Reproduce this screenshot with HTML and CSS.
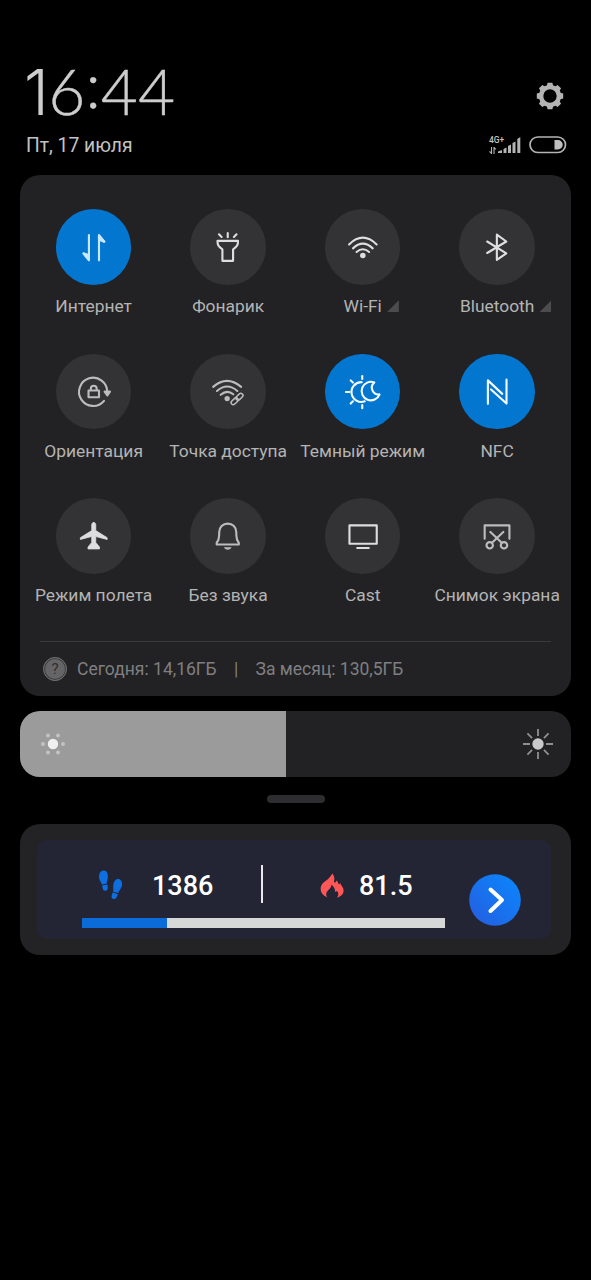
FILE: index.html
```html
<!DOCTYPE html>
<html lang="ru">
<head>
<meta charset="utf-8">
<title>Control center</title>
<link rel="stylesheet" href="styles.css">
</head>
<body>
<main class="screen">
  <header class="header">
    <div class="header-row">
      <div class="clock"><span class="one">1</span>6<span class="colon">:</span>44</div>
      <svg class="gear" width="28" height="28" viewBox="-14 -14 28 28">
        <g fill="#b4b4b4">
          <g id="teeth"><path d="M-3.200-10-2.400-13.200h4.800L3.200-10zM-3.200 10-2.400 13.200h4.800L3.200 10z"/></g>
          <use href="#teeth" transform="rotate(45)"/><use href="#teeth" transform="rotate(90)"/><use href="#teeth" transform="rotate(135)"/>
        </g>
        <circle r="8.900" fill="none" stroke="#b4b4b4" stroke-width="4.400"/>
      </svg>
    </div>
    <div class="header-row status-row">
      <div class="date">Пт, 17 июля</div>
      <div class="status">
        <div class="network">
          <span class="network-type">4G+</span>
          <svg width="7" height="7" viewBox="0 0 7 7"><path d="M2.500 0v6.300L.5 4.300M5 7V.5l1.700 1.800" fill="none" stroke="#b4b4b4" stroke-width="1.100"/></svg>
        </div>
        <svg class="signal" width="23" height="16" viewBox="0 0 23 16" fill="#b4b4b4"><path d="M0 16v-1.500L4 13v3zM5.500 16v-4l3-1.500V16zM10 16V9l3-1.500V16zM14.500 16V6l3-1.500V16zM19.300 16V2l3-2v16z"/></svg>
        <svg class="battery" width="38" height="18" viewBox="0 0 38 18"><rect x="1" y="1" width="35.500" height="15.500" rx="7.750" fill="none" stroke="#b4b4b4" stroke-width="1.700"/><path d="M25.500 4h3.500a4.700 4.700 0 0 1 0 9.500h-3.500z" fill="#c0c0c0"/></svg>
      </div>
    </div>
  </header>

  <section class="panel">
    <div class="tiles">
      <div class="tile"><svg class="disc on" viewBox="0 0 75 75"><path d="M32.700 26v25L27.500 44.500M42.700 51V26l5 6.300"/><path class="solid" d="M27.300 44l5.400 2v4zM48 32.500l-5.300-2v-4z"/></svg><span class="label">Интернет</span></div>
      <div class="tile"><svg class="disc" viewBox="0 0 75 75"><path d="M27.300 31.700h20.400c0 4-.7 5.600-4.900 8.300v11.500H32.200V40c-4.200-2.700-4.900-4.300-4.900-8.300zM37.500 24v4M28.800 25.200l2.600 2.600M46.200 25.200l-2.600 2.600"/></svg><span class="label">Фонарик</span></div>
      <div class="tile"><svg class="disc" viewBox="0 0 75 75"><path d="M23.900 35.200q13.700-13.400 27.400 0M27.800 39.100q9.800-9.200 19.600 0M31.400 42.700q6.200-5.400 12.400 0"/><circle class="solid" cx="37.600" cy="46.200" r="1.700"/></svg><span class="label">Wi-Fi<i class="more"></i></span></div>
      <div class="tile"><svg class="disc" viewBox="0 0 75 75"><path d="M28 32.300 47 44l-9.400 6.500v-25L47 32.300 28 43.700"/></svg><span class="label">Bluetooth<i class="more"></i></span></div>

      <div class="tile"><svg class="disc dim" viewBox="0 0 75 75"><path d="M50.900 37.700a14 14 0 1 0-3.200 8.800M32.300 36.300h10.400v6.700H32.300zM34.600 36v-1.600a2.900 2.900 0 0 1 5.800 0V36"/><path class="solid" d="M48.300 37.300h5.300L51 41.200z"/></svg><span class="label">Ориентация</span></div>
      <div class="tile"><svg class="disc dim" viewBox="0 0 75 75"><path d="M23 32.700q13.700-12 27.800 0M26.800 36.700q10.100-8.800 20.200 0M30.500 40.500q6.400-5.600 12.500-.5"/><circle class="solid" cx="36.900" cy="44.300" r="1.600"/><g transform="rotate(-43 46.700 44.700)" stroke-width="1.500"><rect x="39.500" y="42.600" width="8" height="4.200" rx="2.100"/><rect x="46" y="42.600" width="8" height="4.200" rx="2.100"/></g></svg><span class="label">Точка доступа</span></div>
      <div class="tile"><svg class="disc on bright" viewBox="0 0 75 75"><path d="M36.500 28a9.800 9.800 0 1 0 3 19M37 21.800v3M37 50.800v3M20.800 37.700h3.400M25.500 26.200l2.200 2.200M25.500 49.200l2.200-2.200M49 28.300A9.200 9.200 0 1 0 54.200 40.100 6.700 6.700 0 0 1 49 28.300z"/></svg><span class="label">Темный режим</span></div>
      <div class="tile"><svg class="disc on bright" viewBox="0 0 75 75"><path d="M28.700 49.500V26.200L43 39.600M31.800 35.200 47.200 49.200V25.500"/></svg><span class="label">NFC</span></div>

      <div class="tile"><svg class="disc" viewBox="0 0 75 75"><path class="solid" stroke-width=".8" d="M37.500 24.300c1.300 0 2 1 2 2.300v5.800l11.300 7v1.800l-11.300-3v6l3.700 4.500v1.900H31.800v-1.900l3.700-4.500v-6l-11.300 3v-1.800l11.300-7v-5.800c0-1.300.7-2.300 2-2.300z"/></svg><span class="label">Режим полета</span></div>
      <div class="tile"><svg class="disc dim" viewBox="0 0 75 75"><path d="M26.500 46.200h22v-1.500c-1.900-2.600-2.500-5-2.500-8.300v-2.300c0-5.200-3.600-8.600-8.500-8.600S29 28.900 29 34.100v2.300c0 3.300-.6 5.700-2.500 8.300z"/><path class="solid" stroke="none" d="M33.600 48.900h7.800c-1.300 3.200-6.500 3.200-7.800 0z"/></svg><span class="label">Без звука</span></div>
      <div class="tile"><svg class="disc" viewBox="0 0 75 75"><path d="M24.300 27.200h27.100v18.300H24.300zM32 49.700h11.500"/></svg><span class="label">Cast</span></div>
      <div class="tile"><svg class="disc dim" viewBox="0 0 75 75"><path d="M25.500 40.500V27.200h24.600v13.300M32.800 44.400 44 33.700M42.400 44.400 31.200 33.700"/><circle cx="30.500" cy="47" r="3.200"/><circle cx="44.700" cy="47" r="3.200"/></svg><span class="label">Снимок экрана</span></div>
    </div>
    <div class="usage">
      <span class="help">?</span>
      <span class="today">Сегодня: 14,16ГБ</span>
      <span class="bar">|</span>
      <span class="month">За месяц: 130,5ГБ</span>
    </div>
  </section>

  <section class="brightness">
    <div class="level">
      <svg width="26" height="26" viewBox="-13 -13 26 26"><circle r="5.200" fill="#f0f0f0"/><g fill="#c2c2c2"><circle cx="-10" r="2"/><circle cx="10" r="2"/><circle cx="-5" cy="-8.500" r="2"/><circle cx="5" cy="-8.500" r="2"/><circle cx="-5" cy="8.500" r="2"/><circle cx="5" cy="8.500" r="2"/></g></svg>
    </div>
    <svg width="32" height="32" viewBox="-16 -16 32 32"><circle r="5.700" fill="#c9c9c9"/><path d="M0-15v7M0 8v7M-15 0h7M8 0h7M-10.600-10.600l4.700 4.700M5.900 5.900l4.700 4.700M-10.600 10.600l4.700-4.700M5.900-5.900l4.700-4.700" stroke="#8f8f8f" stroke-width="1.800"/></svg>
  </section>
  <div class="handle"></div>

  <section class="widget">
    <div class="fitness">
      <div class="stats">
        <div class="metrics">
          <svg class="steps" width="26" height="32" viewBox="0 0 26 32" fill="#0d6fe0"><path d="M5.500.6c3.400-.2 4.800 3.400 4.300 7.400-.3 2.200-1 3.200-1 5.500l-5 .9C3.500 12.200.8 10 1 6.200 1.100 3.200 2.700.8 5.500.6zM4.100 15.400l5.200-1c.9 3.100.6 5.900-1.500 6.400-2.600.5-3.300-2.700-3.700-5.400zM20.500 9c3.100.6 4 3.700 3.400 6.800-.7 3.500-3.200 4.700-3.600 7.200l-5.100-1.300c.4-2.800-.4-4.100.2-7C16 11.200 17.700 8.400 20.500 9zM14.700 22.600l5.100 1.300c-.7 3.200-2.100 5.700-4.600 5.200-2.500-.8-1.700-3.900-.5-6.500z"/></svg>
          <span class="value count">1386</span>
          <i class="divider"></i>
          <svg class="flame" width="24" height="25" viewBox="0 0 24 25" fill="#ff5757"><path d="M7.500 24.400C2.600 22.500.3 18.900.7 15 1.200 9.500 6.200 7.900 8.600 5.400 10.200 3.800 11.200 2.200 12.600.5c1.900 3.200 2.200 5.500 1.300 8.400l1.300.9 1.500-2.300c1.400 1.200 1.200 3 2.300 3.800l1.600-1.100c-.2 2.300 2.900 3.500 3 7.200.1 3.500-2.700 6.100-6.600 7.100 2-2.500 1.600-5-.1-6.600l-1.700 1.200c.1-3.100-1.500-6.200-4-7.400.5 4.200-4.900 5.600-5 9.300 0 1.400.4 2.500 1.300 3.400z"/></svg>
          <span class="value">81.5</span>
        </div>
        <div class="progress"><div class="progress-fill"></div></div>
      </div>
      <svg class="go" width="52" height="52" viewBox="0 0 52 52"><defs><linearGradient id="go" x1="0" y1="1" x2="1" y2="0"><stop offset=".1" stop-color="#2361e2"/><stop offset=".9" stop-color="#0c84fb"/></linearGradient></defs><circle cx="26" cy="26" r="25.800" fill="url(#go)"/><path d="M21.500 15.500 33 26 21.500 37" fill="none" stroke="#fff" stroke-width="4" stroke-linecap="round" stroke-linejoin="round"/></svg>
    </div>
  </section>
</main>
</body>
</html>
```
FILE: styles.css
```css
* { box-sizing: border-box; }
body { margin: 0; background: #000; font-family: Roboto, "Noto Sans", sans-serif; }
.screen { display: flex; flex-direction: column; width: 591px; height: 1280px; padding: 0 20px; background: #000; }

.header { display: flex; flex-direction: column; height: 175px; padding: 61px 4px 0 6px; }
.header-row { display: flex; justify-content: space-between; align-items: center; height: 62px; }
.clock { height: 62px; font: 300 64px/62px Lato, sans-serif; color: #cdcdcd; margin: -3px 0 0 -2px; -webkit-text-stroke: .4px #cdcdcd; }
.one { font: 300 63px/62px Inter, sans-serif; letter-spacing: -.5px; -webkit-text-stroke: 0; }
.colon { line-height: 30px; vertical-align: 7px; }
.gear { margin: 7px 3px 0 0; }
.status-row { height: 44px; }
.date { font-size: 19.300px; color: #c3c3c3; }
.status { display: flex; align-items: center; }
.network { display: flex; flex-direction: column; width: 9px; height: 18px; }
.network-type { font-size: 8.500px; line-height: 9px; font-weight: 500; color: #c4c4c4; white-space: nowrap; }
.network svg { margin-top: 2px; }
.signal { margin-right: 8px; }

.panel { display: flex; flex-direction: column; height: 521px; padding: 34px 6px 0; border-radius: 20px; background: #222224; }
.tiles { display: grid; grid-template-columns: repeat(4, 134.500px); grid-auto-rows: 144.500px; }
.tile { display: flex; flex-direction: column; align-items: center; gap: 9.700px; }
.disc { width: 75.500px; height: 75.500px; flex: none; border-radius: 50%; background: #333335; fill: none; stroke: #dedede; stroke-width: 2.100; stroke-linejoin: round; stroke-linecap: round; }
.disc .solid { fill: #dedede; }
.disc.dim { stroke: #bcbcbc; }
.disc.dim .solid { fill: #bcbcbc; }
.disc.on { background: #0377d0; stroke: #c8e8ff; }
.disc.on .solid { fill: #c8e8ff; }
.disc.on.bright { stroke: #f5fbff; }
.label { position: relative; margin-left: .8px; font-size: 17.400px; line-height: 24px; color: #b4b4b4; white-space: nowrap; }
.more { position: absolute; left: calc(100% + 5px); top: 6px; width: 12px; height: 12px; background: #4c4c4e; clip-path: polygon(100% 0, 100% 100%, 0 100%); }

.usage { display: flex; align-items: center; height: 55px; margin: -2px 14px 0; padding-left: 3px; border-top: 1px solid #3b3b3d; font-size: 17.500px; color: #7f7f81; }
.help { width: 24px; height: 24px; margin-right: 10px; border: 1px solid #707072; border-radius: 50%; background: #656567; box-shadow: inset 0 0 0 1px #3c3c3e; color: #2f2f31; font-size: 15px; line-height: 22px; text-align: center; }
.bar { width: 39px; text-align: center; }

.brightness { display: flex; justify-content: space-between; align-items: center; height: 66px; margin-top: 15px; padding-right: 17px; border-radius: 20px; overflow: hidden; background: #222224; }
.level { display: flex; align-items: center; width: 265.500px; height: 66px; padding-left: 19.500px; background: #9b9b9b; }
.handle { align-self: center; width: 58px; height: 8px; margin-top: 18px; border-radius: 4px; background: #2d2d2f; }

.widget { height: 131px; margin-top: 21px; padding: 16px 20px 16px 17px; border-radius: 20px; background: #232325; }
.fitness { display: flex; height: 99px; padding-left: 45px; border-radius: 10px; background: #232535; }
.stats { width: 363px; padding-top: 25px; }
.metrics { display: flex; align-items: center; height: 38px; }
.steps { margin: 3px 0 0 16px; }
.value { padding-top: 4px; font-size: 27px; font-weight: 500; color: #fff; }
.count { width: 109px; margin-left: 28px; }
.divider { width: 2px; height: 38px; margin-right: 57px; background: #e8e8ee; }
.flame { margin: 2px 15px 0 0; }
.progress { height: 10px; margin-top: 15px; background: #d6d8d8; }
.progress-fill { width: 85px; height: 10px; background: #0b6bd8; }
.go { margin: 34px 0 0 24px; }
```
